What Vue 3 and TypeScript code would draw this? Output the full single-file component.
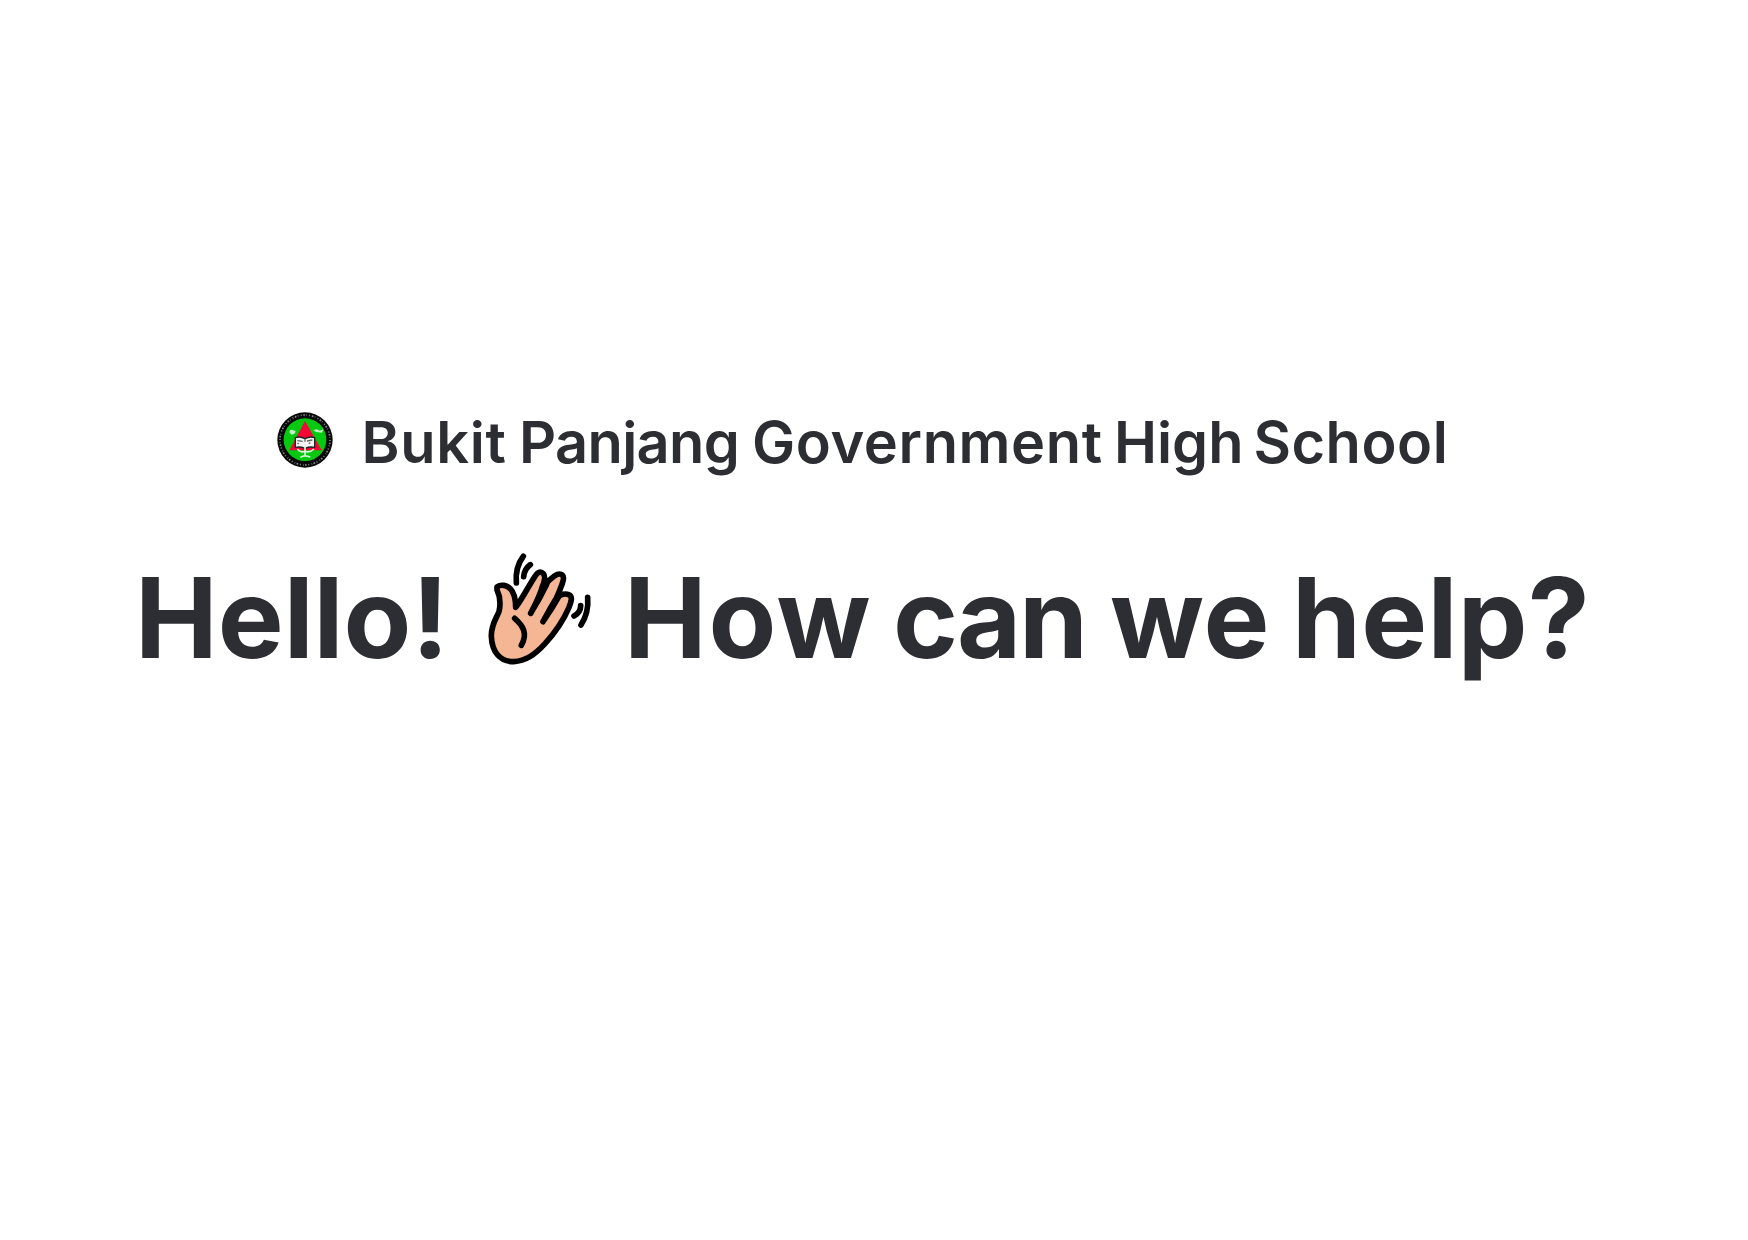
<script setup lang="ts">
interface Word {
  text: string
  width: number
  spacing: number
}

const school: Word[] = [
  { text: 'Bukit', width: 157.5, spacing: 0.7 },
  { text: 'Panjang', width: 233, spacing: -0.65 },
  { text: 'Government', width: 362, spacing: 0.6 },
  { text: 'High', width: 139.5, spacing: 0 },
  { text: 'School', width: 196, spacing: 0.5 },
]

const greeting: Word[] = [{ text: 'Hello!', width: 345, spacing: 0 }]

const question: Word[] = [
  { text: 'How', width: 269, spacing: 1.7 },
  { text: 'can', width: 217, spacing: -2.2 },
  { text: 'we', width: 182, spacing: 1 },
  { text: 'help?', width: 296, spacing: 0.3 },
]

const style = (w: Word) => ({ width: `${w.width}px`, letterSpacing: `${w.spacing}px` })
</script>

<template>
  <main class="page">
    <header class="school">
      <svg class="crest" viewBox="0 0 210 210" aria-hidden="true">
        <circle cx="105" cy="105" r="83" fill="#080808" />
        <circle cx="105" cy="105" r="75" fill="none" stroke="#858585" stroke-width="5" stroke-dasharray="3 5 5 4 2 7" />
        <circle cx="105" cy="104" r="64" fill="#05c910" />
        <path d="M105 48 155 136H58Z" fill="#f50735" />
        <path d="M59 84q-2-12 9-9l9 4q-2 10-12 10zM130 75l10-2 10 4 10-4-4 10-18-2z" fill="#c5efc0" />
        <path d="M76 98q15-5 29 3 14-8 29-3v29q-15-3-29 3-14-6-29-3z" fill="#f4f4f4" stroke="#222" stroke-width="4" />
        <path d="M105 101v9M82 107l16 2M111 108l16-3M82 115l5 1M116 115l5-1" fill="none" stroke="#666" stroke-width="4" />
        <path d="M105 124v28M82 132q10 13 23 7 15 5 27-7M91 157q14-9 30 0" fill="none" stroke="#d9f6d8" stroke-width="5" />
      </svg>
      <h2 class="school-name">
        <span v-for="w in school" :key="w.text" class="word" :style="style(w)">{{ w.text }}</span>
      </h2>
    </header>
    <h1 class="hello">
      <span v-for="w in greeting" :key="w.text" class="word" :style="style(w)">{{ w.text }}</span>
      <svg class="hand" viewBox="0 0 360 390" aria-hidden="true">
        <g stroke="#000" stroke-width="17" stroke-linecap="round" stroke-linejoin="round">
          <path
            d="M51 126C62 117 80 120 91 131C105 145 107 163 107 187C129 158 145 124 165 94C174 79 183 78 190 86C198 95 193 111 187 126C199 114 214 97 230 89C245 83 254 92 249 108C245 124 237 140 231 156C242 148 257 145 266 149C279 154 274 170 267 187C250 227 225 263 195 296C164 330 137 348 101 350C59 350 36 320 34 274C33 241 48 221 57 200C62 178 60 153 51 134Z"
            fill="#f4b694"
          />
          <path d="M187 126C178 155 165 180 152 205M200 118Q180 160 152 205M231 156Q210 190 189 230M238 152Q215 193 189 230M104 220C127 240 145 264 124 301" fill="none" />
          <path d="M130 34Q105 67 109 114M151 59Q133 72 131 95M323 157Q327 203 303 240M302 182Q302 202 282 213" fill="none" />
        </g>
      </svg>
      <span v-for="w in question" :key="w.text" class="word" :style="style(w)">{{ w.text }}</span>
    </h1>
  </main>
</template>

<style>
body {
  background: #fff;
}
</style>

<style scoped>
.page {
  box-sizing: border-box;
  width: 1748px;
  height: 1240px;
  padding-top: 405px;
  overflow: hidden;
  background: #fff;
  color: #2d2e33;
  font-family: Inter, "Open Sans", sans-serif;
}
.school {
  display: flex;
  height: 70px;
  padding-left: 270px;
}
.crest {
  width: 70px;
  height: 70px;
  margin-right: 21.5px;
}
.school-name,
.hello {
  display: flex;
  margin: 0;
  white-space: nowrap;
}
.school-name {
  font-size: 57.7px;
  line-height: 75px;
  font-weight: 600;
}
.hello {
  height: 130px;
  margin-top: 70px;
  padding-left: 135px;
  font-size: 110.7px;
  line-height: 147px;
  font-weight: 650;
}
.hand {
  width: 120px;
  height: 130px;
  margin-right: 24px;
}
.word,
.crest,
.hand {
  flex: none;
}
</style>
